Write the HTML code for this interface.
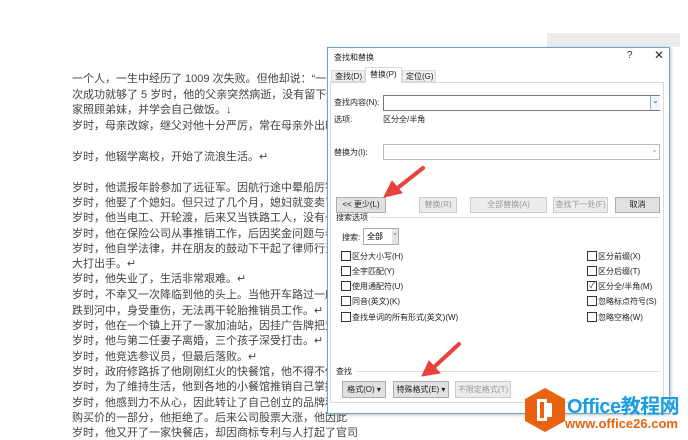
<!DOCTYPE html>
<html><head><meta charset="utf-8"><style>
body{margin:0;width:688px;height:438px;overflow:hidden;background:#fff;position:relative;font-family:"Liberation Sans","Noto Sans CJK SC",sans-serif;}
.a{position:absolute;white-space:nowrap;}
.doc{left:72px;font-size:11px;color:#444;letter-spacing:0}
.dl{font-size:8px;color:#222}
.btn{position:absolute;background:#e1e1e1;border:1px solid #adadad;font-size:8px;color:#222;text-align:center;box-sizing:border-box;}
.dis{color:#999;border-color:#ccc;background:#ececec}
.cb{position:absolute;width:8px;height:8px;border:1px solid #333;background:#fff;}
</style></head><body>
<div class="a" style="left:547px;top:33px;width:133px;height:14px;background:#ececec"></div>
<div class="a doc" style="top:70px">一个人，一生中经历了 1009 次失败。但他却说：“一次成功</div>
<div class="a doc" style="top:86px">次成功就够了 5 岁时，他的父亲突然病逝，没有留下任何财</div>
<div class="a doc" style="top:101px">家照顾弟妹，并学会自己做饭。↓</div>
<div class="a doc" style="top:117px">岁时，母亲改嫁，继父对他十分严厉，常在母亲外出时痛打</div>
<div class="a doc" style="top:148px">岁时，他辍学离校，开始了流浪生活。↵</div>
<div class="a doc" style="top:179px">岁时，他谎报年龄参加了远征军。因航行途中晕船厉害，被</div>
<div class="a doc" style="top:194px">岁时，他娶了个媳妇。但只过了几个月，媳妇就变卖了他所</div>
<div class="a doc" style="top:209px">岁时，他当电工、开轮渡，后来又当铁路工人，没有一样</div>
<div class="a doc" style="top:225px">岁时，他在保险公司从事推销工作，后因奖金问题与老板</div>
<div class="a doc" style="top:240px">岁时，他自学法律，并在朋友的鼓动下干起了律师行当。</div>
<div class="a doc" style="top:255px">大打出手。↵</div>
<div class="a doc" style="top:270px">岁时，他失业了，生活非常艰难。↵</div>
<div class="a doc" style="top:286px">岁时，不幸又一次降临到他的头上。当他开车路过一座大</div>
<div class="a doc" style="top:302px">跌到河中，身受重伤，无法再干轮胎推销员工作。↵</div>
<div class="a doc" style="top:317px">岁时，他在一个镇上开了一家加油站，因挂广告牌把竞争</div>
<div class="a doc" style="top:332px">岁时，他与第二任妻子离婚，三个孩子深受打击。↵</div>
<div class="a doc" style="top:348px">岁时，他竞选参议员，但最后落败。↵</div>
<div class="a doc" style="top:363px">岁时，政府修路拆了他刚刚红火的快餐馆，他不得不低价</div>
<div class="a doc" style="top:378px">岁时，为了维持生活，他到各地的小餐馆推销自己掌握的</div>
<div class="a doc" style="top:394px">岁时，他感到力不从心，因此转让了自己创立的品牌和专</div>
<div class="a doc" style="top:409px">购买价的一部分，他拒绝了。后来公司股票大涨，他因此</div>
<div class="a doc" style="top:424px">岁时，他又开了一家快餐店，却因商标专利与人打起了官司</div>

<div class="a" style="left:327px;top:47px;width:343px;height:367px;background:#fff;border:1px solid #6aa7c9;box-sizing:border-box;box-shadow:1px 1px 3px rgba(0,0,0,.25)"></div>
<div class="a dl" style="left:334px;top:52px">查找和替换</div>
<div class="a" style="left:627px;top:50px;font-size:10px;color:#333">?</div>
<div class="a" style="left:654px;top:48px;font-size:12px;color:#333">✕</div>
<div class="a" style="left:330px;top:82px;width:334px;height:321px;border:1px solid #d9d9d9;box-sizing:border-box"></div>
<div class="a dl" style="left:331px;top:70px;width:34px;height:12px;border:1px solid #d9d9d9;background:#f0f0f0;padding-left:3px;box-sizing:border-box;line-height:12px">查找(D)</div>
<div class="a dl" style="left:365px;top:67px;width:37px;height:16px;border:1px solid #d9d9d9;border-bottom:none;background:#fff;padding-left:4px;box-sizing:border-box;line-height:14px">替换(P)</div>
<div class="a dl" style="left:402px;top:70px;width:34px;height:12px;border:1px solid #d9d9d9;background:#f0f0f0;padding-left:3px;box-sizing:border-box;line-height:12px">定位(G)</div>

<div class="a dl" style="left:334px;top:97px">查找内容(N):</div>
<div class="a" style="left:383px;top:95px;width:277px;height:16px;border:1px solid #7a7a7a;box-sizing:border-box"></div>
<div class="a" style="left:650px;top:96px;width:9px;height:14px;border-left:1px solid #aaa;font-size:8px;color:#555;text-align:center;line-height:10px;background:#eef5fb">⌄</div>
<div class="a dl" style="left:334px;top:114px">选项:</div>
<div class="a dl" style="left:383px;top:114px">区分全/半角</div>
<div class="a dl" style="left:334px;top:147px">替换为(I):</div>
<div class="a" style="left:383px;top:144px;width:277px;height:16px;border:1px solid #bbb;box-sizing:border-box"></div>
<div class="a" style="left:650px;top:145px;width:9px;height:14px;font-size:8px;color:#999;text-align:center;line-height:10px">⌄</div>

<div class="btn" style="left:336px;top:197px;width:50px;height:16px;line-height:14px">&lt;&lt; 更少(L)</div>
<div class="btn dis" style="left:419px;top:197px;width:38px;height:16px;line-height:14px">替换(R)</div>
<div class="btn dis" style="left:470px;top:197px;width:77px;height:16px;line-height:14px">全部替换(A)</div>
<div class="btn dis" style="left:553px;top:197px;width:55px;height:16px;line-height:14px">查找下一处(F)</div>
<div class="btn" style="left:615px;top:197px;width:45px;height:16px;line-height:14px">取消</div>

<div class="a dl" style="left:336px;top:212px">搜索选项</div>
<div class="a" style="left:370px;top:217px;width:290px;height:1px;background:#ddd"></div>
<div class="a dl" style="left:342px;top:232px">搜索:</div>
<div class="a" style="left:363px;top:228px;width:36px;height:17px;border:1px solid #aaa;box-sizing:border-box;background:#fff;font-size:8px;line-height:15px;padding-left:3px">全部</div>
<div class="a" style="left:392px;top:229px;width:6px;height:15px;background:#e5e5e5;font-size:7px;color:#555;line-height:10px">⌄</div>

<div class="cb" style="left:341px;top:251px"></div><div class="a dl" style="left:352px;top:251px">区分大小写(H)</div>
<div class="cb" style="left:341px;top:266px"></div><div class="a dl" style="left:352px;top:266px">全字匹配(Y)</div>
<div class="cb" style="left:341px;top:281px"></div><div class="a dl" style="left:352px;top:281px">使用通配符(U)</div>
<div class="cb" style="left:341px;top:296px"></div><div class="a dl" style="left:352px;top:296px">同音(英文)(K)</div>
<div class="cb" style="left:341px;top:312px"></div><div class="a dl" style="left:352px;top:312px">查找单词的所有形式(英文)(W)</div>
<div class="cb" style="left:587px;top:251px"></div><div class="a dl" style="left:598px;top:251px">区分前缀(X)</div>
<div class="cb" style="left:587px;top:266px"></div><div class="a dl" style="left:598px;top:266px">区分后缀(T)</div>
<div class="cb" style="left:587px;top:281px;font-size:8px;line-height:8px;color:#333;text-align:center">✓</div><div class="a dl" style="left:598px;top:281px">区分全/半角(M)</div>
<div class="cb" style="left:587px;top:296px"></div><div class="a dl" style="left:598px;top:296px">忽略标点符号(S)</div>
<div class="cb" style="left:587px;top:312px"></div><div class="a dl" style="left:598px;top:312px">忽略空格(W)</div>

<div class="a dl" style="left:336px;top:366px">查找</div>
<div class="a" style="left:356px;top:371px;width:304px;height:1px;background:#ddd"></div>
<div class="btn" style="left:342px;top:381px;width:44px;height:17px;line-height:15px">格式(O) ▾</div>
<div class="btn" style="left:393px;top:381px;width:56px;height:17px;line-height:15px">特殊格式(E) ▾</div>
<div class="btn dis" style="left:455px;top:381px;width:56px;height:17px;line-height:15px">不限定格式(T)</div>

<svg class="a" style="left:0;top:0" width="688" height="438">
<g stroke="#e8423c" stroke-width="4" stroke-linecap="round" fill="#e8423c">
<line x1="423" y1="168" x2="395" y2="190"/>
<polygon points="384,197 392,181 402,193" stroke-width="1"/>
<line x1="459" y1="344" x2="432" y2="369"/>
<polygon points="422,376 429,361 440,373" stroke-width="1"/>
</g>
<polygon points="545,388 565,399 565,421 545,432 525,421 525,399" fill="#e8620f"/>
<rect x="537" y="399" width="10" height="22" fill="#fff"/>
<rect x="540" y="402" width="4" height="16" fill="#e8620f"/>
<rect x="547" y="403" width="5" height="14" fill="#fff"/>
</svg>
<div class="a" style="left:567px;top:390px;font-size:20px;font-weight:bold;color:#1a9ee0;letter-spacing:-0.5px">Office教程网</div>
<div class="a" style="left:565px;top:416px;font-size:13px;font-weight:bold;color:#e8620f">www.office26.com</div>
</body></html>
